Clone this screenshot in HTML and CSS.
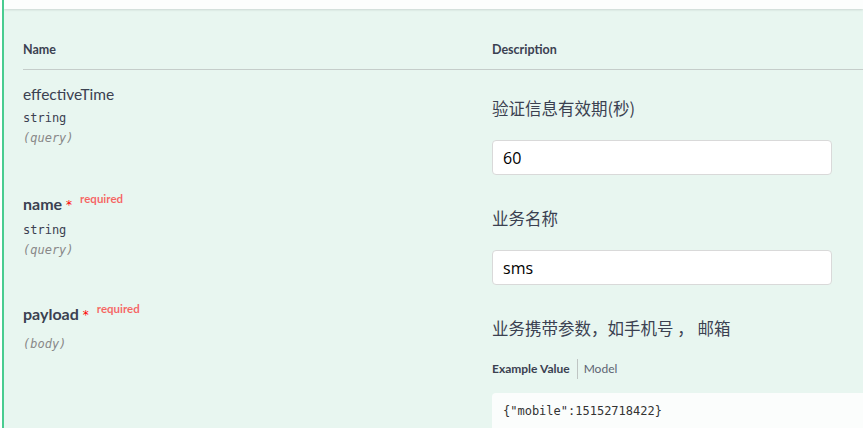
FILE: index.html
```html
<!DOCTYPE html>
<html lang="zh">
<head>
<meta charset="utf-8">
<title>Parameters</title>
<link rel="stylesheet" href="styles.css">
</head>
<body>
<div class="opblock">
  <div class="section-header"></div>
  <div class="params">
    <div class="prow head">
      <div class="col-name">Name</div>
      <div class="col-desc">Description</div>
    </div>

    <div class="prow">
      <div class="col-name">
        <div class="pname">effectiveTime</div>
        <div class="ptype">string</div>
        <div class="pin">(query)</div>
      </div>
      <div class="col-desc">
        <p class="md">验证信息有效期(秒)</p>
        <input class="pinput" type="text" value="60">
      </div>
    </div>

    <div class="prow">
      <div class="col-name">
        <div class="pname req">name<span class="star">*</span><span class="reqlabel">required</span></div>
        <div class="ptype">string</div>
        <div class="pin">(query)</div>
      </div>
      <div class="col-desc">
        <p class="md">业务名称</p>
        <input class="pinput" type="text" value="sms">
      </div>
    </div>

    <div class="prow">
      <div class="col-name">
        <div class="pname req">payload<span class="star">*</span><span class="reqlabel">required</span></div>
        <div class="pin body">(body)</div>
      </div>
      <div class="col-desc">
        <p class="md">业务携带参数，如手机号 ， 邮箱</p>
        <div class="tabs">
          <span class="tab active">Example Value</span>
          <span class="tab">Model</span>
        </div>
        <div class="code">{"mobile":15152718422}</div>
      </div>
    </div>
  </div>
</div>
</body>
</html>
```
FILE: styles.css
```css
html, body {
  margin: 0;
  padding: 0;
  background: #ffffff;
  overflow: hidden;
}
body {
  width: 863px;
  height: 428px;
  font-family: Lato, "Open Sans", sans-serif;
  color: #3b4151;
}
.opblock {
  margin-left: 2px;
  border-left: 2px solid #49cc90;
  background: #e8f6f0;
  height: 428px;
  overflow: hidden;
}
.section-header {
  height: 9px;
  background: rgba(255, 255, 255, 0.85);
  box-shadow: 0 1px 2px rgba(0, 0, 0, 0.12);
  position: relative;
}
.params {
  padding-left: 19px;
}
.prow {
  display: grid;
  grid-template-columns: 469px 1fr;
}
.head {
  padding-top: 33px;
  padding-bottom: 12px;
  border-bottom: 1px solid #c5cdca;
  font-size: 12.5px;
  font-weight: 700;
  line-height: 15px;
  margin-right: -40px;
}
.prow:not(.head) {
  padding-bottom: 5px;
}
.prow:not(.head) .col-name {
  padding-top: 14px;
}
.pname {
  font-size: 15.5px;
  line-height: 20px;
  font-weight: 400;
}
.pname.req {
  font-weight: 700;
  font-size: 16px;
}
.star {
  color: #ff0000;
  font-family: "DejaVu Sans", sans-serif;
  font-weight: 400;
  font-size: 12px;
  margin-left: 4px;
  position: relative;
  top: -1px;
}
.reqlabel {
  color: rgba(255, 0, 0, 0.6);
  font-size: 11.5px;
  font-weight: 700;
  margin-left: 8px;
  position: relative;
  top: -7px;
}
.ptype {
  font-family: "DejaVu Sans Mono", "Liberation Mono", monospace;
  font-size: 12px;
  line-height: 16px;
  margin-top: 6px;
}
.pin {
  font-family: "DejaVu Sans Mono", "Liberation Mono", monospace;
  font-size: 12px;
  font-style: italic;
  color: #888888;
  line-height: 16px;
  margin-top: 4px;
}
.pin.body {
  margin-top: 10px;
}
.md {
  margin: 28px 0 0;
  font-family: "Noto Sans CJK SC", "Noto Sans", sans-serif;
  font-size: 16.5px;
  line-height: 20px;
}
.pinput {
  display: block;
  box-sizing: border-box;
  margin-top: 22px;
  width: 340px;
  height: 35px;
  border: 1px solid #d9d9d9;
  border-radius: 4px;
  background: #ffffff;
  padding: 0 10px;
  font-family: "Open Sans", sans-serif;
  font-size: 16px;
  color: #000000;
}
.tabs {
  margin-top: 21px;
  display: flex;
  align-items: center;
  height: 20px;
  font-size: 12px;
}
.tab {
  line-height: 20px;
  color: #5d6472;
}
.tab.active {
  font-weight: 700;
  color: #3b4151;
  padding-right: 7px;
  border-right: 1px solid #bfc5c3;
  margin-right: 6px;
}
.code {
  margin-top: 14px;
  width: 420px;
  background: #fbfdfc;
  border-radius: 4px;
  padding: 10px 11px;
  font-family: "DejaVu Sans Mono", "Liberation Mono", monospace;
  font-size: 12px;
  line-height: 16px;
  color: #333333;
  height: 40px;
}
```
